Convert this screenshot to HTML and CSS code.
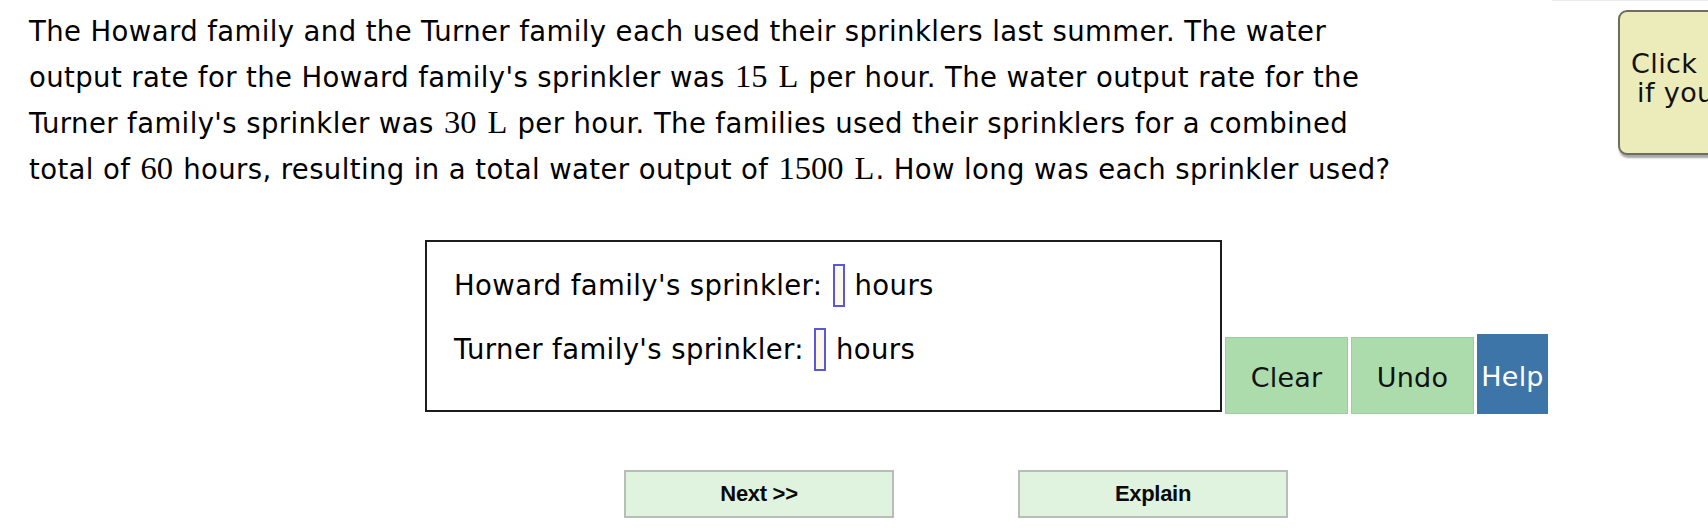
FILE: index.html
```html
<!DOCTYPE html>
<html>
<head>
<meta charset="utf-8">
<link rel="stylesheet" href="styles.css">
</head>
<body>
<div class="page">
  <p class="question">The Howard family and the Turner family each used their sprinklers last summer. The water<br>output rate for the Howard family's sprinkler was <span class="math">15 L</span> per hour. The water output rate for the<br>Turner family's sprinkler was <span class="math">30 L</span> per hour. The families used their sprinklers for a combined<br>total of <span class="math">60</span> hours, resulting in a total water output of <span class="math">1500 L</span>. How long was each sprinkler used?</p>

  <div class="work-row">
    <div class="answer-box">
      <div class="answer-line"><span>Howard family's sprinkler:</span><span class="blank"></span><span>hours</span></div>
      <div class="answer-line"><span>Turner family's sprinkler:</span><span class="blank"></span><span>hours</span></div>
    </div>
    <div class="tools">
      <div class="tool tool-green">Clear</div>
      <div class="tool tool-green">Undo</div>
      <div class="tool tool-blue">Help</div>
    </div>
  </div>

  <div class="nav-row">
    <div class="nav-btn">Next &gt;&gt;</div>
    <div class="nav-btn">Explain</div>
  </div>

  <div class="hint-panel">
    <div class="hint-line">Click here</div>
    <div class="hint-line hint-indent">if you need help</div>
  </div>
  <div class="top-rule"></div>
</div>
</body>
</html>
```
FILE: styles.css
```css
html, body {
  margin: 0;
  padding: 0;
  background: #ffffff;
}

.page {
  position: relative;
  width: 1708px;
  height: 530px;
  overflow: hidden;
  font-family: "DejaVu Sans", Verdana, sans-serif;
  letter-spacing: 0.4px;
  color: #000;
}

.question {
  margin: 0;
  padding: 9px 0 0 29px;
  width: 1500px;
  font-size: 27.5px;
  line-height: 45px;
  white-space: nowrap;
}

.math {
  font-family: "Liberation Serif", "Times New Roman", serif;
  font-size: 32.5px;
  letter-spacing: 0;
  word-spacing: 3px;
  margin: 0 1px;
}

.work-row {
  display: flex;
  align-items: flex-end;
  margin-top: 48px;
  padding-left: 425px;
}

.answer-box {
  box-sizing: border-box;
  width: 797px;
  height: 172px;
  border: 2px solid #1c1c1c;
  padding: 21px 0 0 27px;
  margin-bottom: 2px;
  display: flex;
  flex-direction: column;
  gap: 20px;
  font-size: 27.5px;
}

.answer-line {
  display: flex;
  align-items: center;
  gap: 10px;
  height: 44px;
}

.blank {
  box-sizing: border-box;
  width: 12px;
  height: 43px;
  border: 2px solid #5b57d6;
  background: #fbf8ec;
}

.tools {
  display: flex;
  align-items: flex-end;
  gap: 3px;
  margin-left: 3px;
}

.tool {
  box-sizing: border-box;
  display: flex;
  justify-content: center;
  align-items: center;
  font-size: 27px;
  letter-spacing: 0.2px;
}

.tool-green {
  width: 123px;
  height: 77px;
  padding-top: 3px;
  background: #acdcac;
  border: 1px solid #9fcb9f;
  color: #111;
}

.tool-blue {
  width: 71px;
  height: 80px;
  padding-top: 4px;
  background: #3d75a8;
  color: #ffffff;
}

.nav-row {
  display: flex;
  gap: 124px;
  margin-top: 56px;
  padding-left: 624px;
}

.nav-btn {
  box-sizing: border-box;
  width: 270px;
  height: 48px;
  background: #dff3df;
  border: 2px solid #b7bdb7;
  display: flex;
  justify-content: center;
  align-items: center;
  font-family: "Liberation Sans", Arial, sans-serif;
  font-weight: bold;
  font-size: 22px;
  letter-spacing: -0.3px;
  color: #0a0a0a;
}

.hint-panel {
  position: absolute;
  left: 1618px;
  top: 10px;
  width: 220px;
  height: 145px;
  box-sizing: border-box;
  border: 2px solid #6e6e5e;
  border-radius: 9px;
  background: #ecebba;
  box-shadow: 1px 3px 2px rgba(0, 0, 0, 0.35);
  padding: 37px 0 0 11px;
  font-family: "DejaVu Sans", "Lucida Grande", sans-serif;
  font-size: 27px;
  line-height: 29px;
  word-spacing: 8px;
  color: #111;
  white-space: nowrap;
}

.hint-indent {
  margin-left: 6px;
  word-spacing: 0;
}

.top-rule {
  position: absolute;
  left: 1552px;
  top: 0;
  width: 156px;
  height: 1px;
  background: #ececec;
}
```
